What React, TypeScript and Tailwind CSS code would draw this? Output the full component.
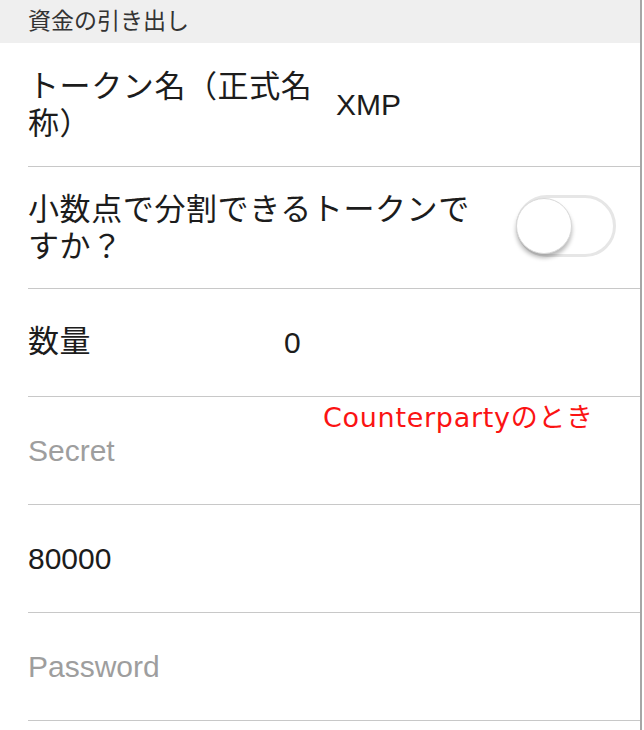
import { useState } from "react";

const FONT = "font-['Liberation_Sans','Noto_Sans_CJK_JP',sans-serif]";

const Row = ({ children, className = "" }: { children: React.ReactNode; className?: string }) => (
  <div className={`ml-[28px] flex items-center border-b border-[#c8c8c8] ${className}`}>{children}</div>
);

const Toggle = ({ on, onChange }: { on: boolean; onChange: (v: boolean) => void }) => (
  <button
    type="button"
    onClick={() => onChange(!on)}
    className={`relative h-[62px] w-[100px] shrink-0 rounded-full border-[3px] transition ${
      on ? "border-[#4cd964] bg-[#4cd964]" : "border-[#e6e6e6] bg-white"
    }`}
  >
    <span
      className={`absolute top-[0px] size-[56px] rounded-full border border-[#d8d8d8] bg-white shadow-[0_4px_4px_rgba(0,0,0,0.28)] transition ${
        on ? "left-[38px]" : "left-[-3px]"
      }`}
    />
  </button>
);

export default function App() {
  const [divisible, setDivisible] = useState(false);

  return (
    <div className={`flex h-[730px] w-[644px] bg-white text-[#1c1c1c] ${FONT}`}>
      <div className="w-[640px]">
        <div className="flex h-[43px] items-center bg-[#efefef] pl-[28px] text-[23px] text-[#333]">資金の引き出し</div>

        <Row className="h-[124px]">
          <div className="w-[300px] text-[31px] leading-[37px] tracking-[0.6px]">トークン名（正式名称）</div>
          <div className="ml-[8px] text-[30px]">XMP</div>
        </Row>

        <Row className="h-[122px] pr-[24px]">
          <div className="w-[455px] text-[31px] leading-[37px] tracking-[0.6px]">小数点で分割できるトークンですか？</div>
          <div className="ml-auto">
            <Toggle on={divisible} onChange={setDivisible} />
          </div>
        </Row>

        <Row className="h-[108px]">
          <div className="w-[256px] text-[31px] tracking-[0.6px]">数量</div>
          <div className="text-[30px]">0</div>
        </Row>

        <Row className="relative h-[108px]">
          <input
            placeholder="Secret"
            className="w-full bg-transparent text-[30px] outline-none placeholder:text-[#9e9e9e]"
          />
          <span className="pointer-events-none absolute left-[295px] top-[1px] font-['DejaVu_Sans','Noto_Sans_CJK_JP',sans-serif] text-[27px] tracking-[0.7px] text-[#fb1313]">
            Counterpartyのとき
          </span>
        </Row>

        <Row className="h-[108px]">
          <input defaultValue="80000" className="w-full bg-transparent text-[30px] outline-none" />
        </Row>

        <Row className="h-[108px]">
          <input
            type="password"
            placeholder="Password"
            className="w-full bg-transparent text-[30px] outline-none placeholder:text-[#9e9e9e]"
          />
        </Row>
      </div>
      <div className="w-[2px] bg-[#a6a6a6]" />
      <div className="flex-1 bg-white" />
    </div>
  );
}
